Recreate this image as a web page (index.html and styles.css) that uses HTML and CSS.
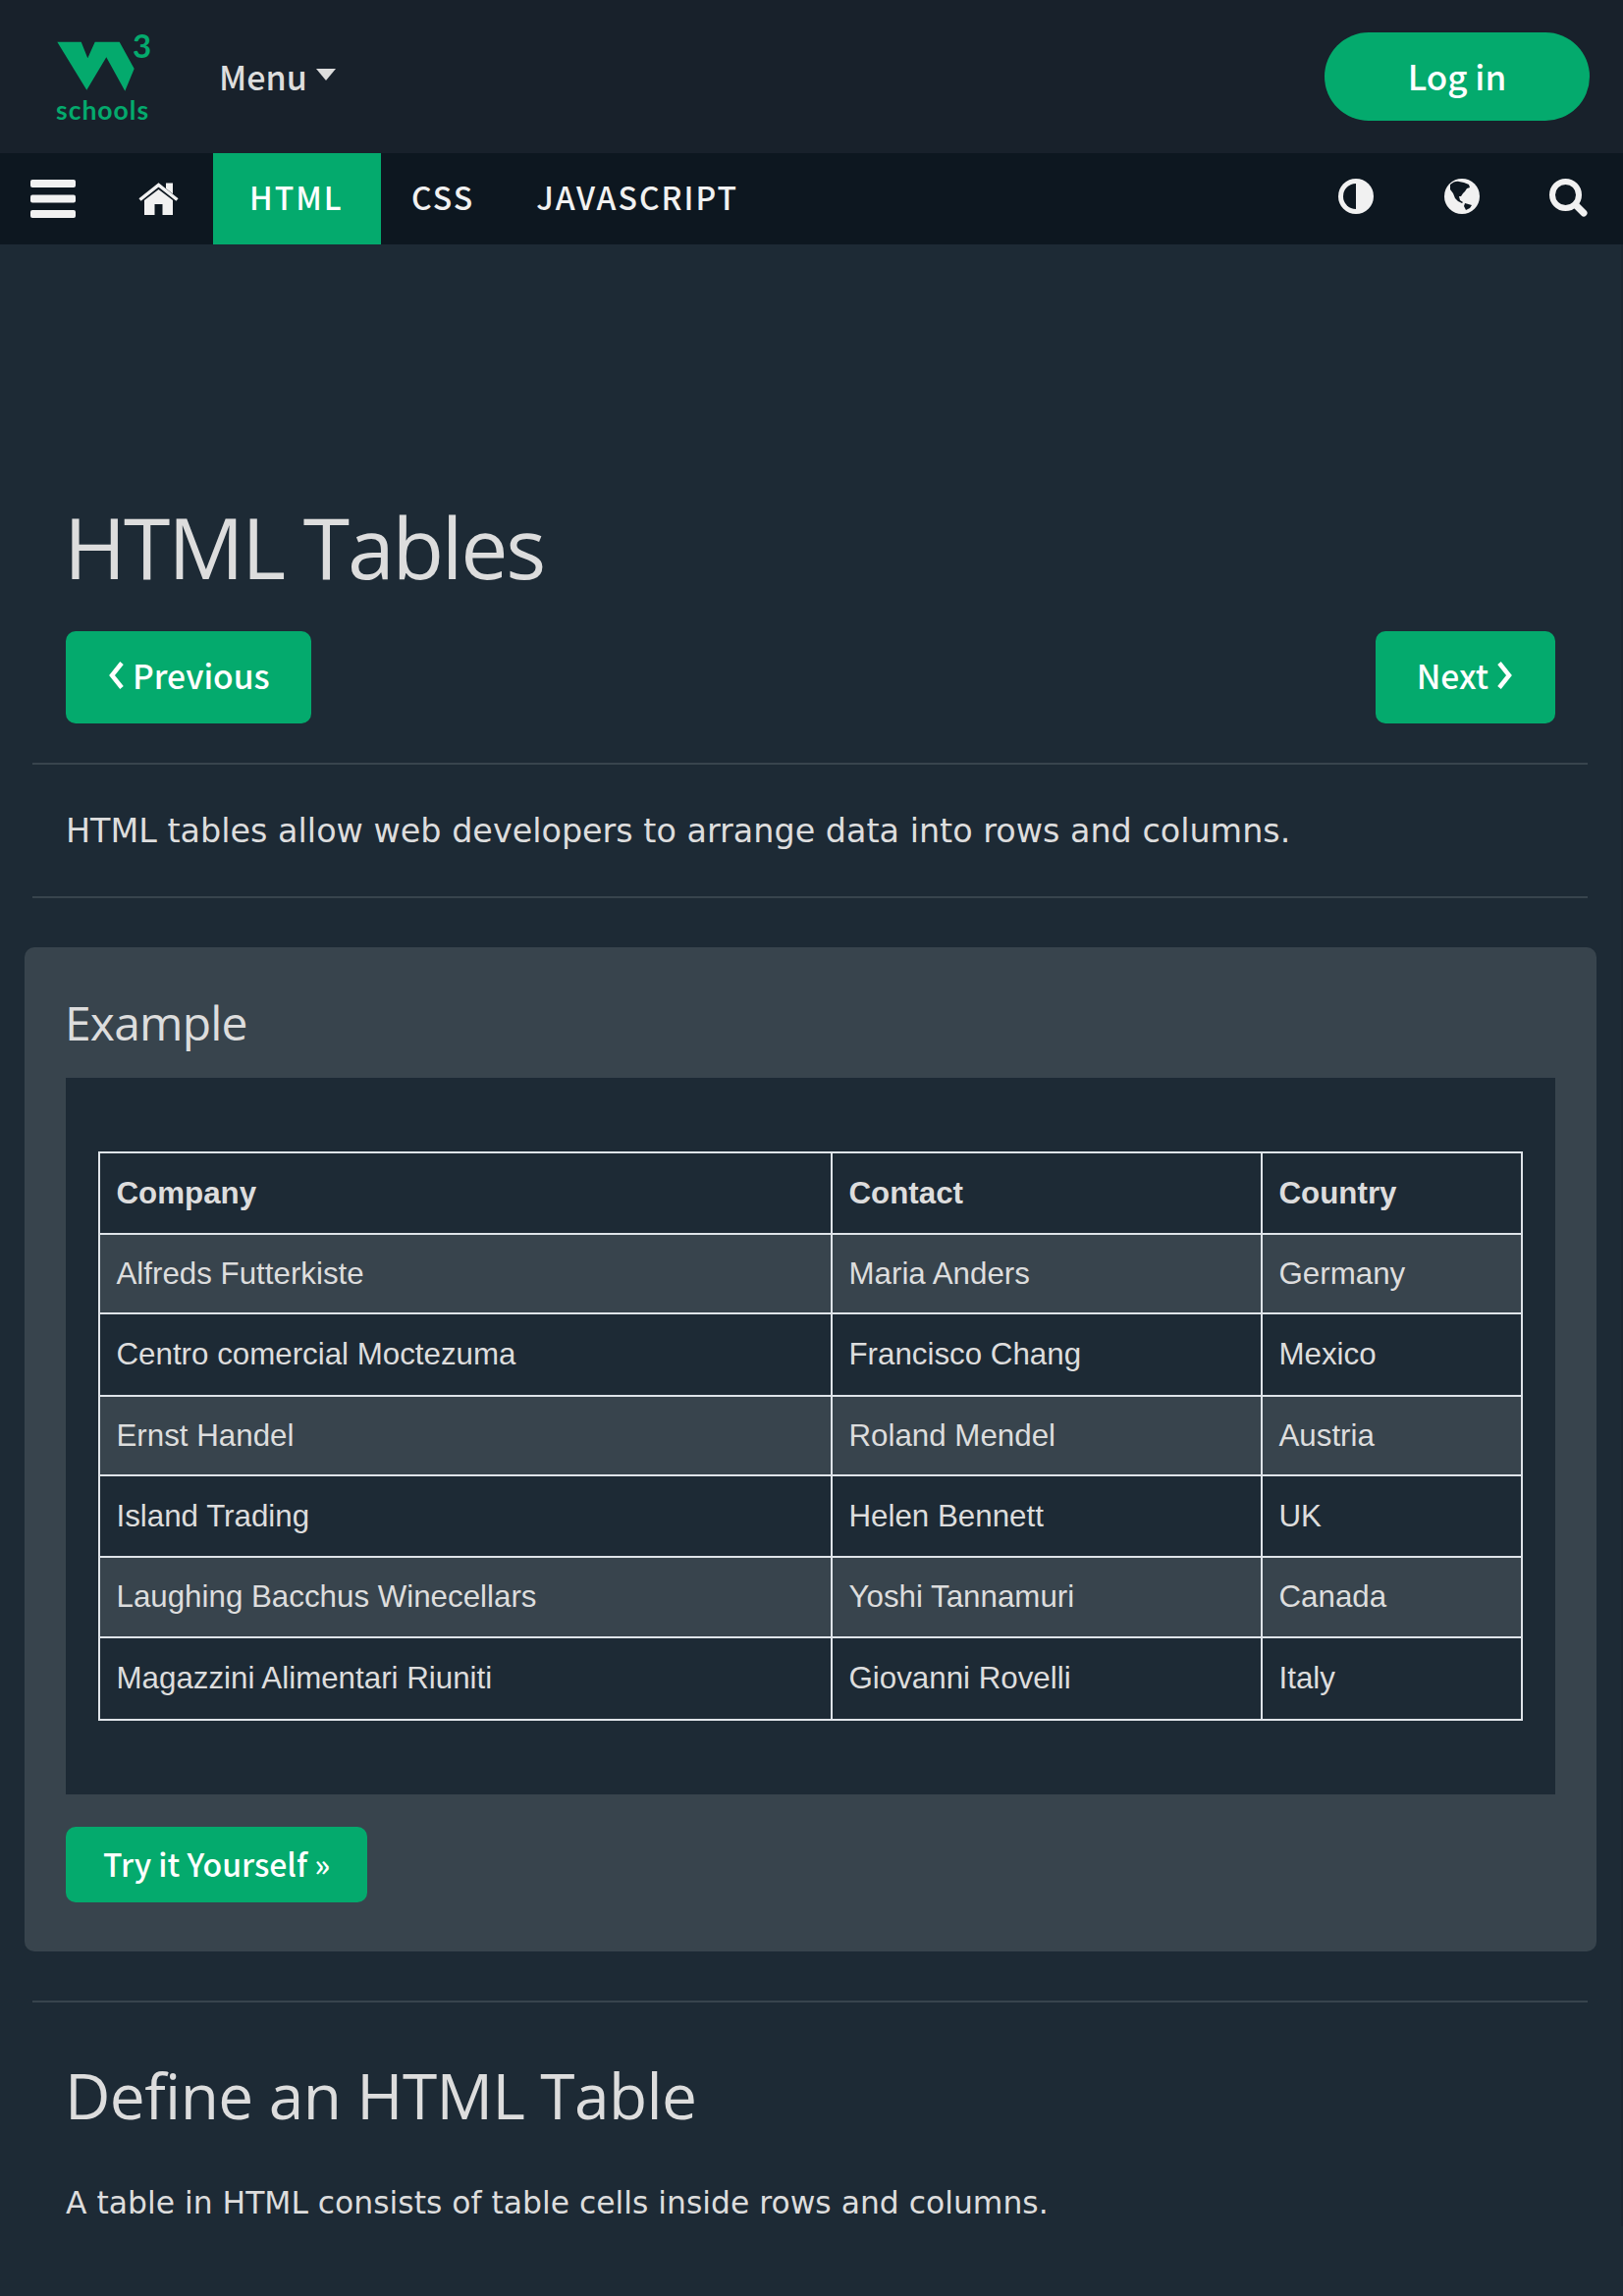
FILE: index.html
```html
<!DOCTYPE html>
<html lang="en">
<head>
    <meta charset="UTF-8">
    <meta name="viewport" content="width=device-width, initial-scale=1.0">
    <title>HTML Tables</title>
    <link rel="stylesheet" href="styles.css">
</head>
<body>
    <header class="topbar">
        <a class="logo" href="#">
            <svg width="96" height="92" viewBox="0 0 96 92">
                <polygon fill="#04aa6d" points="1.300,9.700 25.700,9.700 32.300,26.300 39.700,9.700 64.700,9.700 79.700,37 70.300,59.700 51.300,25.300 31.300,58.700"/>
                <text class="logo-three" x="78" y="26">3</text>
                <text class="logo-word" x="0" y="89">schools</text>
            </svg>
        </a>
        <a class="menu-link" href="#">Menu
            <svg class="caret" width="22" height="14" viewBox="0 0 22 14"><path fill="#ddd" d="M1 1h20L11 13z"/></svg>
        </a>
        <a class="login" href="#">Log in</a>
    </header>

    <nav class="navbar">
        <a class="nav-icon nav-burger" href="#">
            <svg width="46" height="39" viewBox="0 0 46 39" fill="#f1f1f1">
                <rect width="46" height="8" rx="2"/>
                <rect y="15.500" width="46" height="8" rx="2"/>
                <rect y="31" width="46" height="8" rx="2"/>
            </svg>
        </a>
        <a class="nav-icon nav-home" href="#">
            <svg width="41" height="33" viewBox="11 11 41 33">
                <path fill="#f1f1f1" d="M39 11.500h7v11l-7-5.500z"/>
                <path fill="none" stroke="#f1f1f1" stroke-width="3.500" d="M12.500 28.500 31.500 13.500 50.500 28.500"/>
                <path fill="#f1f1f1" d="M17 29 31.500 18 46 29v15H35.500V33h-8v11H17z"/>
            </svg>
        </a>
        <a class="nav-link active" href="#">HTML</a>
        <a class="nav-link" href="#">CSS</a>
        <a class="nav-link" href="#">JAVASCRIPT</a>
        <div class="nav-right">
            <svg class="icon-contrast" width="36" height="36" viewBox="0 0 36 36">
                <circle cx="18" cy="18" r="18" fill="#f1f1f1"/>
                <path fill="#0d1720" d="M18 5A13 13 0 0 0 18 31z"/>
            </svg>
            <svg width="36" height="36" viewBox="0 0 36 36">
                <circle cx="18" cy="18" r="18" fill="#f1f1f1"/>
                <path fill="#0d1720" d="M6 6C9 3 13 2 15 3l5 1 5 2 1 3-3 1-2 3-2 2-2 3h-2l1 4 3 2-1 1-4-2-3-3-2-5-3-4z"/>
                <path fill="#0d1720" d="M21 25l7 2-2 3-4 2-2-4z"/>
            </svg>
            <svg width="39" height="39" viewBox="0 0 39 39" fill="none" stroke="#f1f1f1">
                <circle cx="16.500" cy="16.500" r="13.500" stroke-width="6"/>
                <path stroke-width="7" stroke-linecap="round" d="M27 27l8 8"/>
            </svg>
        </div>
    </nav>

    <main class="content">
        <h1 class="page-title">HTML Tables</h1>
        <div class="pager">
            <a class="btn" href="#">
                <svg width="18" height="28" viewBox="0 0 18 28" fill="none" stroke="#fff" stroke-width="4.500"><path d="M15 1.500 5 14l10 12.500"/></svg>
                Previous
            </a>
            <a class="btn" href="#">
                Next
                <svg width="18" height="28" viewBox="0 0 18 28" fill="none" stroke="#fff" stroke-width="4.500"><path d="M3 1.500 13 14 3 26.500"/></svg>
            </a>
        </div>
        <hr class="rule">
        <p class="intro">HTML tables allow web developers to arrange data into rows and columns.</p>
        <hr class="rule rule-close">

        <section class="panel">
            <h3 class="panel-title">Example</h3>
            <div class="panel-inner">
                <table class="data-table">
                    <tr>
                        <th class="col-company">Company</th>
                        <th class="col-contact">Contact</th>
                        <th class="col-country">Country</th>
                    </tr>
                    <tr class="alt"><td>Alfreds Futterkiste</td><td>Maria Anders</td><td>Germany</td></tr>
                    <tr><td>Centro comercial Moctezuma</td><td>Francisco Chang</td><td>Mexico</td></tr>
                    <tr class="alt"><td>Ernst Handel</td><td>Roland Mendel</td><td>Austria</td></tr>
                    <tr><td>Island Trading</td><td>Helen Bennett</td><td>UK</td></tr>
                    <tr class="alt"><td>Laughing Bacchus Winecellars</td><td>Yoshi Tannamuri</td><td>Canada</td></tr>
                    <tr><td>Magazzini Alimentari Riuniti</td><td>Giovanni Rovelli</td><td>Italy</td></tr>
                </table>
            </div>
            <a class="btn btn-try" href="#">Try it Yourself »</a>
        </section>

        <hr class="rule rule-define">
        <h2 class="section-title">Define an HTML Table</h2>
        <p class="section-text">A table in HTML consists of table cells inside rows and columns.</p>
    </main>
</body>
</html>
```

FILE: styles.css
```css
/* Basic Styling */
* {
    box-sizing: border-box;
}
html, body {
    margin: 0;
    padding: 0;
}
body {
    height: 2339px;
    overflow: hidden;
    background-color: #1d2a35;
    color: #ddd;
    font-family: "Open Sans", sans-serif;
}
a {
    color: inherit;
    text-decoration: none;
}

/* Top bar */
.topbar {
    display: flex;
    align-items: center;
    height: 156px;
    padding: 0 34px 0 57px;
    background-color: #18212b;
}
.logo {
    display: block;
    width: 96px;
    height: 92px;
    margin-top: 2px;
}
.logo svg {
    display: block;
    overflow: visible;
}
.logo-three {
    fill: #04aa6d;
    font-family: "Lato", sans-serif;
    font-size: 33px;
    font-weight: 700;
}
.logo-word {
    fill: #04aa6d;
    font-family: "Lato", sans-serif;
    font-size: 26.500px;
    font-weight: 700;
    letter-spacing: 1px;
}
.menu-link {
    display: flex;
    align-items: center;
    gap: 8px;
    margin-left: 70px;
    font-family: "Noto Sans CJK SC", sans-serif;
    font-size: 34px;
    font-weight: 500;
    line-height: 44px;
    color: #ddd;
}
.caret {
    margin-top: -4px;
}
.login {
    width: 270px;
    height: 90px;
    margin-left: auto;
    border-radius: 45px;
    background-color: #04aa6d;
    color: #fff;
    font-family: "Noto Sans CJK SC", sans-serif;
    font-size: 35px;
    font-weight: 500;
    line-height: 88px;
    text-align: center;
}

/* Nav bar */
.navbar {
    display: flex;
    align-items: stretch;
    height: 93px;
    background-color: #0d1720;
    color: #f1f1f1;
}
.nav-icon {
    display: flex;
    align-items: center;
}
.nav-burger {
    padding-left: 31px;
}
.nav-home {
    padding-left: 64px;
    padding-right: 35px;
}
.nav-link {
    display: flex;
    align-items: center;
    padding: 0 32px 5px 31px;
    font-family: "Noto Sans CJK SC", sans-serif;
    font-size: 32px;
    font-weight: 500;
    letter-spacing: 2px;
}
.nav-link.active {
    width: 171px;
    padding-left: 37px;
    padding-right: 0;
    background-color: #04aa6d;
    color: #fff;
}
.nav-right {
    display: flex;
    align-items: flex-start;
    gap: 71px;
    margin-left: auto;
    padding-top: 26px;
    padding-right: 36px;
}
.icon-contrast {
    margin-right: 1px;
}

/* Page */
.content {
    padding: 248px 0 0 0;
    border-right: 2px solid #1a2530;
}
.page-title {
    margin: 0 0 0 65px;
    font-size: 86px;
    font-weight: 400;
    line-height: 120px;
    letter-spacing: -2.300px;
    color: #ddd;
}
.pager {
    display: flex;
    justify-content: space-between;
    margin: 26px 67px 0;
}
.btn {
    display: inline-flex;
    align-items: center;
    gap: 8px;
    height: 94px;
    padding: 0 42px 5px;
    border-radius: 10px;
    background-color: #04aa6d;
    color: #fff;
    font-family: "Noto Sans CJK SC", sans-serif;
    font-size: 33.600px;
    font-weight: 500;
}
.rule {
    height: 2px;
    margin: 40px 34px 0 33px;
    border: 0;
    background-color: #38444d;
}
.intro {
    margin: 36px 0 0 67px;
    font-family: "DejaVu Sans", sans-serif;
    font-size: 33.400px;
    line-height: 64px;
}
.rule-close {
    margin-top: 34px;
}

/* Example panel */
.panel {
    margin: 50px 25px 0;
    padding: 31px 42px 50px;
    border-radius: 10px;
    background-color: #38444d;
}
.panel-title {
    margin: 0 0 11px -1px;
    font-size: 48px;
    font-weight: 400;
    line-height: 91px;
    letter-spacing: -0.800px;
}
.panel-inner {
    padding: 75px 33px 75px;
    background-color: #1d2a35;
}
.data-table {
    width: 100%;
    table-layout: fixed;
    border-collapse: collapse;
    font-family: "Liberation Sans", Arial, sans-serif;
    font-size: 31.300px;
}
.data-table th,
.data-table td {
    padding: 0 16px 0 16.500px;
    border: 2px solid #dfe4e9;
    text-align: left;
}
.data-table tr:nth-child(1) { height: 83px; }
.data-table tr:nth-child(2) { height: 81px; }
.data-table tr:nth-child(3) { height: 84px; }
.data-table tr:nth-child(4) { height: 81px; }
.data-table tr:nth-child(5) { height: 83px; }
.data-table tr:nth-child(6) { height: 82px; }
.data-table tr:nth-child(7) { height: 84px; }
.col-company {
    width: 746px;
}
.col-contact {
    width: 438px;
}
.alt {
    background-color: #38444d;
}
.btn-try {
    height: 77px;
    margin-top: 33px;
    padding: 0 38px 3px;
    font-size: 32px;
}

/* Next section */
.rule-define {
    margin-top: 50px;
}
.section-title {
    margin: 51px 0 0 66px;
    font-size: 64px;
    font-weight: 400;
    line-height: 88px;
    letter-spacing: -0.600px;
}
.section-text {
    margin: 41px 0 0 67px;
    font-family: "DejaVu Sans", sans-serif;
    font-size: 31.400px;
    line-height: 48px;
}
```
